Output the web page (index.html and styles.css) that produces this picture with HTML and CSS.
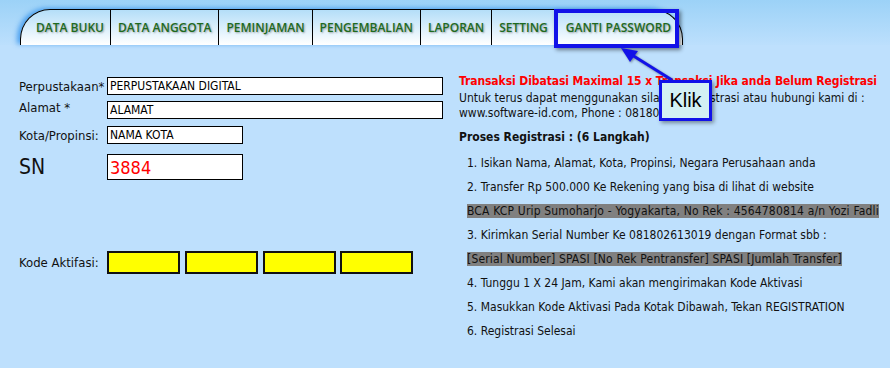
FILE: index.html
```html
<!DOCTYPE html>
<html>
<head>
    <link rel="stylesheet" href="styles.css">
</head>
<body>
    <div class="top">
        <nav class="tabs">
            <a class="tab first">DATA BUKU</a>
            <a class="tab">DATA ANGGOTA</a>
            <a class="tab">PEMINJAMAN</a>
            <a class="tab">PENGEMBALIAN</a>
            <a class="tab">LAPORAN</a>
            <a class="tab">SETTING</a>
            <a class="tab last">GANTI PASSWORD</a>
        </nav>
    </div>

    <div class="main">
        <form class="reg-form">
            <div class="row">
                <label>Perpustakaan*</label>
                <input class="field wide" value="PERPUSTAKAAN DIGITAL">
            </div>
            <div class="row">
                <label>Alamat *</label>
                <input class="field wide" value="ALAMAT">
            </div>
            <div class="row">
                <label>Kota/Propinsi:</label>
                <input class="field short" value="NAMA KOTA">
            </div>
            <div class="row sn-row">
                <label class="sn-label">SN</label>
                <input class="field short sn" value="3884">
            </div>
            <div class="row kode-row">
                <label>Kode Aktifasi:</label>
                <div class="kode">
                    <input class="kode-box">
                    <input class="kode-box">
                    <input class="kode-box">
                    <input class="kode-box">
                </div>
            </div>
        </form>

        <div class="info">
            <p class="warn">Transaksi Dibatasi Maximal 15 x Transaksi Jika anda Belum Registrasi</p>
            <p class="contact">Untuk terus dapat menggunakan silahkan registrasi atau hubungi kami di :<br>www.software-id.com, Phone : 081802613019</p>
            <h4>Proses Registrasi : (6 Langkah)</h4>
            <ol class="steps">
                <li>1. Isikan Nama, Alamat, Kota, Propinsi, Negara Perusahaan anda</li>
                <li>2. Transfer Rp 500.000 Ke Rekening yang bisa di lihat di website</li>
                <li><span class="mark">BCA KCP Urip Sumoharjo - Yogyakarta, No Rek : 4564780814 a/n Yozi Fadli</span></li>
                <li>3. Kirimkan Serial Number Ke 081802613019 dengan Format sbb :</li>
                <li><span class="mark">[Serial Number] SPASI [No Rek Pentransfer] SPASI [Jumlah Transfer]</span></li>
                <li>4. Tunggu 1 X 24 Jam, Kami akan mengirimakan Kode Aktivasi</li>
                <li>5. Masukkan Kode Aktivasi Pada Kotak Dibawah, Tekan REGISTRATION</li>
                <li>6. Registrasi Selesai</li>
            </ol>
        </div>
    </div>

    <!-- annotation overlay -->
    <div class="highlight"></div>
    <svg class="arrow" width="890" height="368">
        <line x1="672" y1="80" x2="632" y2="55" stroke="#1212e8" stroke-width="3"/>
        <polygon points="621,48 638,51 630,62" fill="#1212e8"/>
    </svg>
    <div class="klik">Klik</div>
</body>
</html>
```

FILE: styles.css
```css
body {
    margin: 0;
    width: 890px;
    height: 368px;
    overflow: hidden;
    background-color: #bee0fd;
    font-family: "DejaVu Sans Condensed", "DejaVu Sans", sans-serif;
    font-size: 12px;
    color: #111;
    position: relative;
}
.top {
    height: 45px;
    padding-top: 9px;
    box-sizing: border-box;
    background: linear-gradient(#9cd2f7, #bee0fd 48px);
}
.tabs {
    display: flex;
    margin-left: 20px;
    width: 663px;
    height: 36px;
    box-sizing: border-box;
    border: 1px solid #000;
    border-bottom: none;
    border-radius: 30px 30px 0 0;
    background: linear-gradient(#b4def8, #ffffff);
    box-shadow: -3px -1px 5px rgba(40, 140, 235, 0.75);
}
.tab {
    display: flex;
    align-items: center;
    justify-content: center;
    height: 100%;
    padding: 0 7px;
    border-right: 1px solid #000;
    font-family: "Open Sans", sans-serif;
    font-weight: 600;
    font-size: 12px;
    color: #1e6a1e;
    text-shadow: 1px 1px 2px rgba(0, 0, 0, 0.35);
    white-space: nowrap;
}
.tab.first {
    width: 90px;
    padding-left: 16px;
    box-sizing: border-box;
}
.tab.last {
    border-right: none;
    padding-left: 10px;
}
.main {
    display: flex;
}
.reg-form {
    width: 440px;
    padding: 32px 0 0 19px;
}
.row {
    display: flex;
    align-items: center;
    margin-bottom: 6px;
}
.row label {
    width: 88px;
    font-size: 13px;
    flex-shrink: 0;
}
.row:nth-child(2) label {
    align-self: flex-start;
    margin-top: -1px;
}
.row:nth-child(2) {
    margin-bottom: 7px;
}
.row:nth-child(3) {
    margin-bottom: 10px;
}
.field {
    height: 18px;
    box-sizing: border-box;
    border: 1px solid #000;
    background: #fff;
    padding: 0 2px;
    font-family: "DejaVu Sans Condensed", "DejaVu Sans", sans-serif;
    font-size: 12px;
    color: #000;
    margin: 0;
}
.wide {
    width: 336px;
}
.short {
    width: 136px;
}
.sn-label.sn-label {
    font-size: 21px;
}
.sn {
    height: 26px;
    font-size: 18px;
    color: #ff0000;
}
.kode-row {
    margin-top: 71px;
}
.kode {
    display: flex;
    gap: 5px;
}
.kode-box {
    width: 73px;
    height: 23px;
    box-sizing: border-box;
    border: 2px solid #111;
    background: #ffff00;
    margin: 0;
}
.kode-box:nth-child(3) {
    margin-right: -1px;
}
.info {
    padding-top: 29px;
}
.info p {
    margin: 0;
    line-height: 15px;
}
.warn {
    color: #ff0000;
    font-weight: bold;
    padding-bottom: 2px;
    letter-spacing: -0.08px;
}
.info h4 {
    margin: 9px 0 0;
    font-size: 12px;
    line-height: 15px;
}
.steps {
    list-style: none;
    margin: 9px 0 0;
    padding-left: 8px;
}
.steps li {
    line-height: 18px;
    margin-bottom: 6px;
}
.mark {
    background: #808080;
    letter-spacing: 0.17px;
}
.highlight {
    position: absolute;
    left: 554px;
    top: 9px;
    width: 125px;
    height: 39px;
    box-sizing: border-box;
    border: 4px solid #1212e8;
    box-shadow: 2px 2px 4px rgba(0, 0, 0, 0.45);
}
.arrow {
    position: absolute;
    left: 0;
    top: 0;
    pointer-events: none;
    filter: drop-shadow(1px 1px 1px rgba(0, 0, 0, 0.4));
}
.klik {
    position: absolute;
    left: 659px;
    top: 80px;
    width: 53px;
    height: 41px;
    box-sizing: border-box;
    border: 3px solid #1212e8;
    background: #d3f0f3;
    box-shadow: 2px 2px 4px rgba(0, 0, 0, 0.4);
    display: flex;
    align-items: center;
    justify-content: center;
    font-family: "Liberation Sans", Arial, sans-serif;
    font-size: 20px;
    color: #000;
}
```
